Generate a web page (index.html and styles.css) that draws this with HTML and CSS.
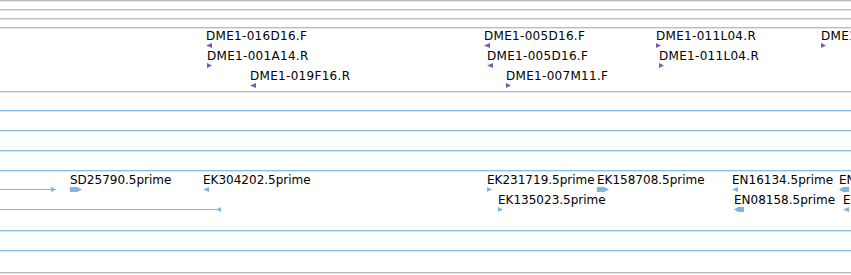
FILE: index.html
```html
<!DOCTYPE html>
<html lang="en">
<head>
    <meta charset="UTF-8">
    <meta name="viewport" content="width=device-width, initial-scale=1.0">
    <title>tracks</title>
    <link rel="stylesheet" href="styles.css">
</head>
<body>
    <div class="view">
        <div class="track gray thin"></div>
        <div class="track gray thin"></div>
        <div class="track gray thin"></div>
        <div class="track gray dme" id="dme"></div>
        <div class="track gray gap"></div>
        <div class="track blue row"></div>
        <div class="track blue row"></div>
        <div class="track blue row"></div>
        <div class="track blue est" id="est"></div>
        <div class="track blue row"></div>
        <div class="track blue row tall"></div>
        <div class="track gray last"></div>
    </div>

    <script>
        // x, row, label, glyph (l/r small, L/R thick)
        const dmeFeatures = [
            [206, 0, 'DME1-016D16.F', 'l'],
            [484, 0, 'DME1-005D16.F', 'l'],
            [656, 0, 'DME1-011L04.R', 'r'],
            [821, 0, 'DME1-012B07.R', 'r'],
            [207, 1, 'DME1-001A14.R', 'r'],
            [487, 1, 'DME1-005D16.F', 'l'],
            [659, 1, 'DME1-011L04.R', 'r'],
            [250, 2, 'DME1-019F16.R', 'l'],
            [506, 2, 'DME1-007M11.F', 'r']
        ];

        const estFeatures = [
            [70, 0, 'SD25790.5prime', 'R'],
            [203, 0, 'EK304202.5prime', 'l'],
            [487, 0, 'EK231719.5prime', 'r'],
            [597, 0, 'EK158708.5prime', 'R'],
            [732, 0, 'EN16134.5prime', 'l'],
            [839, 0, 'EN20417.5prime', 'L'],
            [498, 1, 'EK135023.5prime', 'r'],
            [734, 1, 'EN08158.5prime', 'L'],
            [843, 1, 'EC11902.5prime', 'l']
        ];

        // spans running in from the left edge
        const estSpans = [
            [0, 56, 18, 'right'],
            [0, 221, 38, 'left']
        ];

        function addFeatures(trackId, features, base) {
            const track = document.getElementById(trackId);
            features.forEach(function (f) {
                const el = document.createElement('div');
                el.className = 'feat';
                el.style.left = f[0] + 'px';
                el.style.top = (f[1] * 20 + base) + 'px';

                const label = document.createElement('div');
                label.className = 'label';
                label.textContent = f[2];

                const glyph = document.createElement('div');
                glyph.className = 'glyph ' + (f[3] === 'L' ? 'bigl' : f[3] === 'R' ? 'bigr' : f[3]);

                el.appendChild(label);
                el.appendChild(glyph);
                track.appendChild(el);
            });
        }

        function addSpans(trackId, spans) {
            const track = document.getElementById(trackId);
            spans.forEach(function (s) {
                const el = document.createElement('div');
                el.className = 'span ' + s[3];
                el.style.left = s[0] + 'px';
                el.style.width = (s[1] - s[0]) + 'px';
                el.style.top = s[2] + 'px';
                track.appendChild(el);
            });
        }

        addFeatures('dme', dmeFeatures, 1);
        addFeatures('est', estFeatures, 2);
        addSpans('est', estSpans);
    </script>
</body>
</html>
```

FILE: styles.css
```css
body {
    margin: 0;
    background-color: #fff;
    font-family: "DejaVu Sans", sans-serif;
    font-size: 12px;
    color: #000;
    overflow: hidden;
}
.view {
    width: 851px;
    height: 275px;
    overflow: hidden;
}
.track {
    position: relative;
    box-sizing: border-box;
    border-top: 1px solid;
}
.track.gray {
    border-top-color: #bcbcbc;
    box-shadow: inset 0 1px 0 #e4e4e4;
}
.track.blue {
    border-top-color: #8bbde2;
    box-shadow: inset 0 1px 0 #d8e9f6;
}
.thin {
    height: 9px;
}
.dme {
    height: 64px;
    color: #7a5ab5;
}
.dme .label {
    letter-spacing: 0.3px;
}
.gap {
    height: 19px;
}
.row {
    height: 20px;
}
.row.tall {
    height: 22px;
}
.est {
    height: 60px;
    color: #7db6e0;
}
.last {
    height: 3px;
}
.feat {
    position: absolute;
    white-space: nowrap;
}
.label {
    color: #000;
    line-height: 14px;
}
.glyph {
    height: 5px;
    background-color: currentColor;
}
.glyph.l {
    width: 6px;
    clip-path: polygon(0 50%, 100% 0, 100% 100%);
}
.glyph.r {
    width: 5px;
    clip-path: polygon(0 0, 100% 50%, 0 100%);
}
.glyph.bigl {
    width: 10px;
    clip-path: polygon(0 50%, 40% 0, 100% 0, 100% 100%, 40% 100%);
}
.glyph.bigr {
    width: 12px;
    clip-path: polygon(0 0, 60% 0, 100% 50%, 60% 100%, 0 100%);
}
.span {
    position: absolute;
    height: 1px;
    background-color: #7db6e0;
}
.span::after {
    content: "";
    position: absolute;
    top: -2px;
    width: 5px;
    height: 5px;
    background-color: #7db6e0;
}
.span.right::after {
    right: 0;
    clip-path: polygon(0 0, 100% 50%, 0 100%);
}
.span.left::after {
    right: 0;
    clip-path: polygon(0 50%, 100% 0, 100% 100%);
}
```
